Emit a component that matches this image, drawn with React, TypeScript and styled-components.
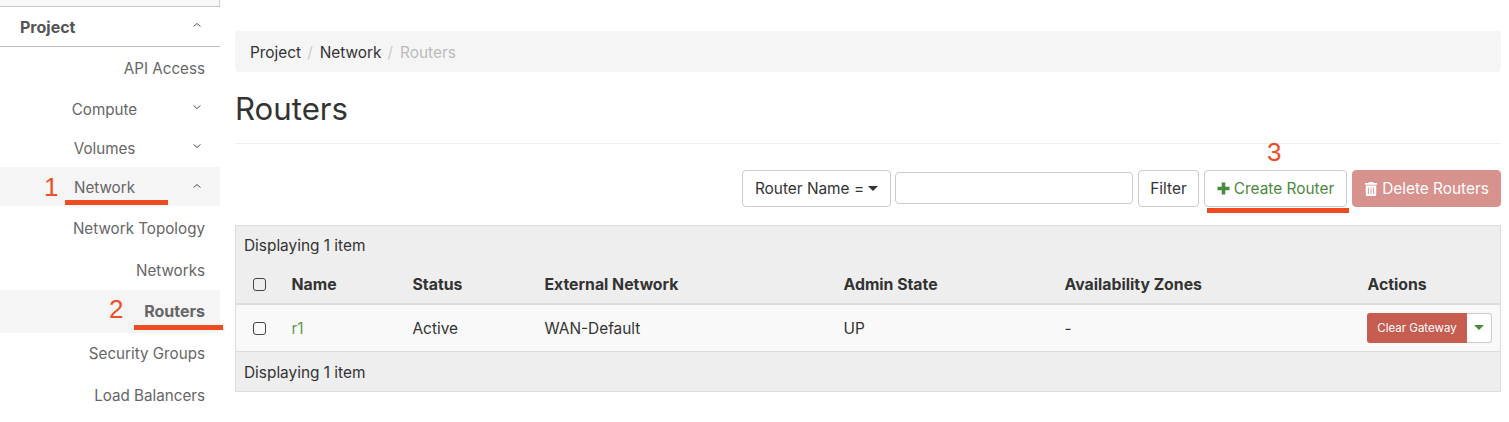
import React from 'react';
import styled, { createGlobalStyle } from 'styled-components';
import { FaTrashAlt } from 'react-icons/fa';

const GlobalStyle = createGlobalStyle`
  html, body {
    margin: 0;
    padding: 0;
    background: #fff;
    font-family: Inter, "Liberation Sans", sans-serif;
    color: #333;
  }
  * { box-sizing: border-box; }
`;

const navItems = [
  { label: 'API Access', height: 42 },
  { label: 'Compute', height: 40, caret: 'down', centered: true },
  { label: 'Volumes', height: 38, caret: 'down', centered: true },
  { label: 'Network', height: 39, caret: 'up', centered: true, active: true, shift: 1 },
  { label: 'Network Topology', height: 43, shift: 1 },
  { label: 'Networks', height: 41, shift: 1 },
  { label: 'Routers', height: 43, active: true, bold: true, shift: -1 },
  { label: 'Security Groups', height: 41 },
  { label: 'Load Balancers', height: 42 },
];

const columns = [
  { title: 'Name', value: 'r1', width: 121, link: true },
  { title: 'Status', value: 'Active', width: 132 },
  { title: 'External Network', value: 'WAN-Default', width: 299 },
  { title: 'Admin State', value: 'UP', width: 221 },
  { title: 'Availability Zones', value: '-', width: 303 },
];

const Caret = ({ up }: { up?: boolean }) => (
  <CaretIcon viewBox="0 0 10 6" $up={up}>
    <path d="M1.5 1.5 5 4.5 8.5 1.5" fill="none" stroke="#555" strokeWidth="1" />
  </CaretIcon>
);

const DownTriangle = ({ color }: { color: string }) => (
  <svg width="10" height="5" viewBox="0 0 10 5">
    <path d="M0 0h10L5 5z" fill={color} />
  </svg>
);

const PlusIcon = () => (
  <svg width="13" height="13" viewBox="0 0 13 13">
    <path d="M6.5 0.5v12M0.5 6.5h12" stroke="#4a8a3c" strokeWidth="3.6" fill="none" />
  </svg>
);

export default function App() {
  return (
    <Page>
      <GlobalStyle />
      <Sidebar>
        <TopStub />
        <ProjectRow>
          <span>Project</span>
          <Caret up />
        </ProjectRow>
        {navItems.map((item) => (
          <NavRow
            key={item.label}
            $height={item.height}
            $active={item.active}
            $bold={item.bold}
            $centered={item.centered}
            $shift={item.shift || 0}
          >
            <NavLabel>{item.label}</NavLabel>
            {item.caret && <Caret up={item.caret === 'up'} />}
          </NavRow>
        ))}
      </Sidebar>
      <Main>
        <Breadcrumb>
          <Crumb>Project</Crumb>
          <Slash>/</Slash>
          <Crumb>Network</Crumb>
          <Slash>/</Slash>
          <Crumb $muted>Routers</Crumb>
        </Breadcrumb>
        <Title>Routers</Title>
        <Toolbar>
          <Button $width={149}>
            Router Name = <DownTriangle color="#333" />
          </Button>
          <SearchInput />
          <Button $width={61}>Filter</Button>
          <Button $width={143} $color="#4a8a3c">
            <PlusIcon /> Create Router
          </Button>
          <Button $width={149} $color="#fff" $bg="#d7928d" $border="#d7928d">
            <FaTrashAlt size={14} /> Delete Routers
          </Button>
        </Toolbar>
        <Table>
          <colgroup>
            <col width={48} />
            {columns.map((c) => (
              <col key={c.title} width={c.width} />
            ))}
            <col />
          </colgroup>
          <thead>
            <tr>
              <CaptionCell colSpan={7} $height={39}>Displaying 1 item</CaptionCell>
            </tr>
            <tr>
              <HeadCell $box><Check /></HeadCell>
              {columns.map((c) => (
                <HeadCell key={c.title}>{c.title}</HeadCell>
              ))}
              <HeadCell>Actions</HeadCell>
            </tr>
          </thead>
          <tbody>
            <tr>
              <BodyCell $box><Check /></BodyCell>
              {columns.map((c) => (
                <BodyCell key={c.title} $link={c.link}>{c.value}</BodyCell>
              ))}
              <BodyCell>
                <SplitButton>
                  <DangerPart>Clear Gateway</DangerPart>
                  <ToggleButton><DownTriangle color="#4a8a3c" /></ToggleButton>
                </SplitButton>
              </BodyCell>
            </tr>
          </tbody>
          <tfoot>
            <tr>
              <CaptionCell colSpan={7} $height={40} $low>Displaying 1 item</CaptionCell>
            </tr>
          </tfoot>
        </Table>
      </Main>

      <Mark style={{ left: 44, top: 170 }}>1</Mark>
      <Underline style={{ left: 65, top: 200, width: 103 }} />
      <Mark style={{ left: 109, top: 292 }}>2</Mark>
      <Underline style={{ left: 134, top: 325, width: 89 }} />
      <Mark style={{ left: 1267, top: 135 }}>3</Mark>
      <Underline style={{ left: 1207, top: 208, width: 142 }} />
    </Page>
  );
}

const Page = styled.div`
  position: relative;
  display: flex;
  width: 1509px;
  height: 422px;
  overflow: hidden;
  background: #fff;
`;

const Sidebar = styled.nav`
  width: 220px;
  flex: none;
  font-size: 15.2px;
  color: #666;
`;

const TopStub = styled.div`
  height: 7px;
  background: #f8f8f8;
  border-right: 1px solid #ccc;
  border-bottom: 1px solid #c4c4c4;
`;

const ProjectRow = styled.div`
  height: 40px;
  display: flex;
  align-items: center;
  justify-content: space-between;
  padding: 0 18px 0 20px;
  font-size: 16px;
  font-weight: 700;
  color: #555;
  border-bottom: 1px solid #bbb;
`;

const NavRow = styled.div<{ $height: number; $active?: boolean; $bold?: boolean; $centered?: boolean; $shift: number }>`
  height: ${(p) => p.$height}px;
  display: flex;
  align-items: center;
  padding: ${(p) => (p.$shift > 0 ? p.$shift * 2 : 0)}px ${(p) => (p.$centered ? '18px' : '15px')}
    ${(p) => (p.$shift < 0 ? -p.$shift * 2 : 0)}px ${(p) => (p.$centered ? '17px' : '0')};
  background: ${(p) => (p.$active ? '#f5f5f5' : 'transparent')};
  font-size: ${(p) => (p.$bold ? '16px' : '15.2px')};
  font-weight: ${(p) => (p.$bold ? 700 : 400)};
  text-align: ${(p) => (p.$centered ? 'center' : 'right')};
`;

const NavLabel = styled.span`
  flex: 1;
`;

const CaretIcon = styled.svg<{ $up?: boolean }>`
  width: 10px;
  height: 6px;
  flex: none;
  margin-top: -4px;
  transform: ${(p) => (p.$up ? 'rotate(180deg)' : 'none')};
`;

const Main = styled.main`
  flex: 1;
  padding: 31px 8px 0 15px;
`;

const Breadcrumb = styled.div`
  height: 41px;
  display: flex;
  align-items: center;
  padding: 1px 15px 0;
  background: #f5f5f5;
  border-radius: 4px;
  font-size: 15.4px;
`;

const Crumb = styled.span<{ $muted?: boolean }>`
  color: ${(p) => (p.$muted ? '#bbb' : '#333')};
`;

const Slash = styled.span`
  color: #ccc;
  margin: 0 7px 0 6px;
`;

const Title = styled.h1`
  margin: 0;
  height: 72px;
  padding-top: 19px;
  font-size: 31.2px;
  line-height: 36px;
  font-weight: 400;
  color: #333;
  border-bottom: 1px solid #eee;
`;

const Toolbar = styled.div`
  display: flex;
  justify-content: flex-end;
  align-items: center;
  gap: 5px;
  margin-top: 26px;
  height: 37px;
`;

const Button = styled.button<{ $width: number; $color?: string; $bg?: string; $border?: string }>`
  width: ${(p) => p.$width}px;
  height: 37px;
  display: inline-flex;
  align-items: center;
  justify-content: center;
  gap: 4px;
  padding: 0;
  font: 15.4px Inter, "Liberation Sans", sans-serif;
  color: ${(p) => p.$color || '#333'};
  background: ${(p) => p.$bg || '#fff'};
  border: 1px solid ${(p) => p.$border || '#ccc'};
  border-radius: 4px;
`;

const SearchInput = styled.input`
  width: 238px;
  height: 32px;
  border: 1px solid #ccc;
  border-radius: 4px;
  margin: 0 0 1px -1px;
`;

const Table = styled.table`
  width: 1266px;
  margin-top: 18px;
  table-layout: fixed;
  border-collapse: collapse;
  border: 1px solid #ddd;
  font-size: 15.4px;
`;

const CaptionCell = styled.td<{ $height: number; $low?: boolean }>`
  height: ${(p) => p.$height}px;
  padding: ${(p) => (p.$low ? '2px' : '0')} 8px 0;
  background: #eee;
  color: #333;
`;

const HeadCell = styled.th<{ $box?: boolean }>`
  height: 39px;
  padding: 2px 8px 0;
  background: #eee;
  text-align: ${(p) => (p.$box ? 'center' : 'left')};
  font-size: 15.8px;
  font-weight: 700;
  color: #333;
  border-bottom: 2px solid #ddd;
`;

const BodyCell = styled.td<{ $box?: boolean; $link?: boolean }>`
  height: 48px;
  padding: 2px 8px 0;
  background: #f9f9f9;
  text-align: ${(p) => (p.$box ? 'center' : 'left')};
  color: ${(p) => (p.$link ? '#5a9a4d' : '#333')};
  border-bottom: 1px solid #ddd;
`;

const Check = styled.span`
  display: block;
  width: 13px;
  height: 13px;
  margin: 0 auto;
  border: 1.5px solid #444;
  border-radius: 3px;
`;

const SplitButton = styled.div`
  display: inline-flex;
  height: 30px;
  margin: -2px 0 0 -1px;
  vertical-align: middle;
`;

const DangerPart = styled.span`
  width: 100px;
  display: flex;
  align-items: center;
  justify-content: center;
  padding-left: 1px;
  background: #c75c50;
  border-radius: 3px 0 0 3px;
  color: #fff;
  font: 11.5px Inter, "Liberation Sans", sans-serif;
`;

const ToggleButton = styled.span`
  width: 25px;
  display: flex;
  align-items: center;
  justify-content: center;
  background: #fff;
  border: 1px solid #ccc;
  border-left: 0;
  border-radius: 0 3px 3px 0;
`;

const Mark = styled.span`
  position: absolute;
  font: 26px/34px "Liberation Sans", Arial, sans-serif;
  color: #ee4f2b;
`;

const Underline = styled.div`
  position: absolute;
  height: 5px;
  background: #ee4b20;
`;
